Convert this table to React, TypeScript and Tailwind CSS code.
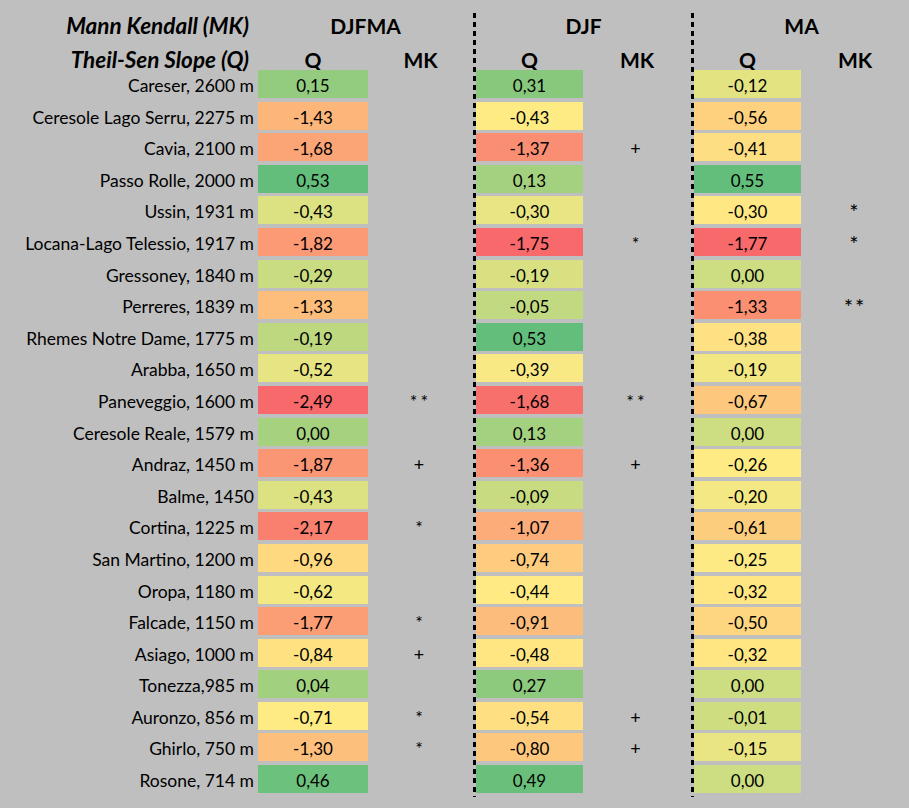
import React from "react";

type Row = {
  name: string;
  q: [number, number, number];
  mk: [string, string, string];
};

const rows: Row[] = [
  { name: "Careser, 2600 m", q: [0.15, 0.31, -0.12], mk: ["", "", ""] },
  { name: "Ceresole Lago Serru, 2275 m", q: [-1.43, -0.43, -0.56], mk: ["", "", ""] },
  { name: "Cavia, 2100 m", q: [-1.68, -1.37, -0.41], mk: ["", "+", ""] },
  { name: "Passo Rolle, 2000 m", q: [0.53, 0.13, 0.55], mk: ["", "", ""] },
  { name: "Ussin, 1931 m", q: [-0.43, -0.3, -0.3], mk: ["", "", "*"] },
  { name: "Locana-Lago Telessio, 1917 m", q: [-1.82, -1.75, -1.77], mk: ["", "*", "*"] },
  { name: "Gressoney, 1840 m", q: [-0.29, -0.19, 0.0], mk: ["", "", ""] },
  { name: "Perreres, 1839 m", q: [-1.33, -0.05, -1.33], mk: ["", "", "**"] },
  { name: "Rhemes Notre Dame, 1775 m", q: [-0.19, 0.53, -0.38], mk: ["", "", ""] },
  { name: "Arabba, 1650 m", q: [-0.52, -0.39, -0.19], mk: ["", "", ""] },
  { name: "Paneveggio, 1600 m", q: [-2.49, -1.68, -0.67], mk: ["**", "**", ""] },
  { name: "Ceresole Reale, 1579 m", q: [0.0, 0.13, 0.0], mk: ["", "", ""] },
  { name: "Andraz, 1450 m", q: [-1.87, -1.36, -0.26], mk: ["+", "+", ""] },
  { name: "Balme, 1450", q: [-0.43, -0.09, -0.2], mk: ["", "", ""] },
  { name: "Cortina, 1225 m", q: [-2.17, -1.07, -0.61], mk: ["*", "", ""] },
  { name: "San Martino, 1200 m", q: [-0.96, -0.74, -0.25], mk: ["", "", ""] },
  { name: "Oropa, 1180 m", q: [-0.62, -0.44, -0.32], mk: ["", "", ""] },
  { name: "Falcade, 1150 m", q: [-1.77, -0.91, -0.5], mk: ["*", "", ""] },
  { name: "Asiago, 1000 m", q: [-0.84, -0.48, -0.32], mk: ["+", "", ""] },
  { name: "Tonezza,985 m", q: [0.04, 0.27, 0.0], mk: ["", "", ""] },
  { name: "Auronzo, 856 m", q: [-0.71, -0.54, -0.01], mk: ["*", "+", ""] },
  { name: "Ghirlo, 750 m", q: [-1.3, -0.8, -0.15], mk: ["*", "+", ""] },
  { name: "Rosone, 714 m", q: [0.46, 0.49, 0.0], mk: ["", "", ""] },
];

const RED = [248, 105, 107];
const YELLOW = [255, 235, 132];
const GREEN = [99, 190, 123];

// excel style 3-colour scale: min red, median yellow, max green
const makeScale = (values: number[]) => {
  const sorted = [...values].sort((a, b) => a - b);
  const min = sorted[0];
  const max = sorted[sorted.length - 1];
  const mid = sorted[Math.floor(sorted.length / 2)];
  return (v: number) => {
    let from = YELLOW;
    let to = GREEN;
    let t = 0;
    if (v <= mid) {
      from = RED;
      to = YELLOW;
      t = mid === min ? 1 : (v - min) / (mid - min);
    } else {
      t = max === mid ? 0 : (v - mid) / (max - mid);
    }
    const c = from.map((f, i) => Math.round(f + (to[i] - f) * t));
    return `rgb(${c[0]}, ${c[1]}, ${c[2]})`;
  };
};

const scales = [0, 1, 2].map((col) => makeScale(rows.map((r) => r.q[col])));

const fmt = (v: number) => v.toFixed(2).replace(".", ",");

const groups = [
  { title: "DJFMA", qw: "w-[110px]", mkw: "w-[105px]", line: false, bigMk: false },
  { title: "DJF", qw: "w-[107px]", mkw: "w-[108px]", line: true, bigMk: false },
  { title: "MA", qw: "w-[107px]", mkw: "w-[108px]", line: true, bigMk: true },
];

const Group: React.FC<{ index: number }> = ({ index }) => {
  const g = groups[index];
  return (
    <div className="flex">
      {g.line && (
        <div className="w-[3px] bg-[repeating-linear-gradient(to_bottom,#000_0_5px,transparent_5px_9px)]" />
      )}
      <div className="flex flex-col">
        <div className="h-[26px] leading-[26px] text-center text-[21px] font-bold">
          {g.title}
        </div>
        <div className="h-[31px] flex text-[21px] font-bold">
          <div className={`${g.qw} pt-[10px] leading-[21px] text-center`}>Q</div>
          <div className={`${g.mkw} pt-[10px] leading-[21px] text-center`}>MK</div>
        </div>
        {rows.map((r) => (
          <div key={r.name} className="h-[31.6px] flex">
            <div
              className={`${g.qw} h-[28px] leading-[31px] text-center text-[17px]`}
              style={{ backgroundColor: scales[index](r.q[index]) }}
            >
              {fmt(r.q[index])}
            </div>
            <div
              className={`${g.mkw} leading-[31.6px] text-center ${
                g.bigMk ? "text-[22px] tracking-[2px]" : "text-[18px] tracking-[3px]"
              }`}
            >
              {r.mk[index]}
            </div>
          </div>
        ))}
      </div>
    </div>
  );
};

export default function App() {
  return (
    <div className="min-h-screen w-[909px] bg-[#bfbfbf] pt-[13px] text-black font-['Lato',sans-serif]">
      <div className="flex">
        <div className="w-[258px] flex flex-col text-right">
          <div className="h-[26px] leading-[26px] pr-[9px] text-[22.5px] font-bold italic">
            Mann Kendall (MK)
          </div>
          <div className="h-[31px] pt-[10px] leading-[22px] pr-[9px] text-[22.5px] font-bold italic">
            Theil-Sen Slope (Q)
          </div>
          {rows.map((r) => (
            <div key={r.name} className="h-[31.6px] leading-[31.6px] pr-[4px] text-[17.5px] whitespace-nowrap">
              {r.name}
            </div>
          ))}
        </div>
        <Group index={0} />
        <Group index={1} />
        <Group index={2} />
      </div>
    </div>
  );
}
